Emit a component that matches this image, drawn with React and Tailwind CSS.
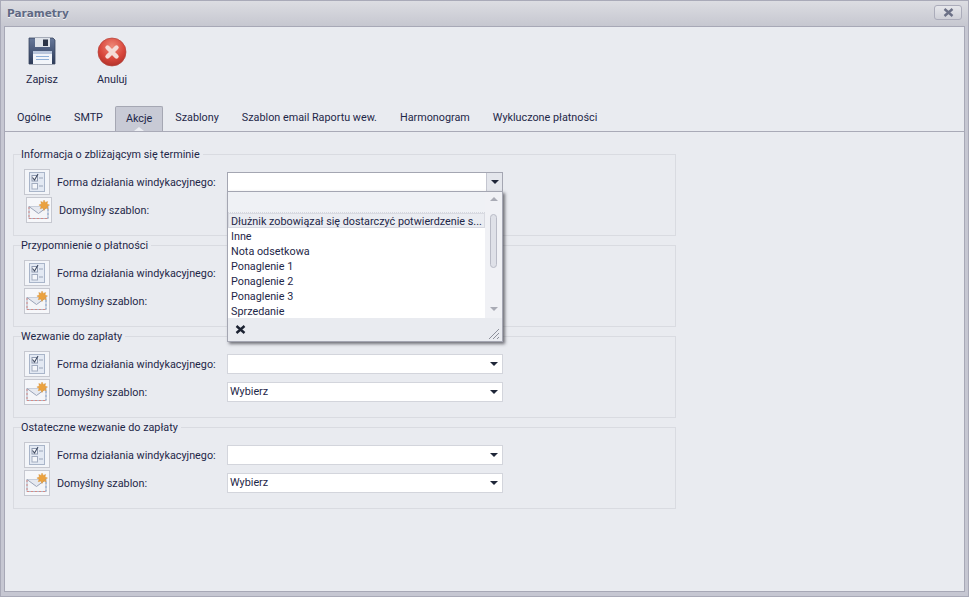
import React from "react";

const font = { fontFamily: 'Roboto, sans-serif' };

function Floppy() {
  return (
    <svg width="28" height="28" viewBox="0 0 28 28">
      <defs>
        <linearGradient id="fl" x1="0" y1="0" x2="0" y2="1">
          <stop offset="0" stopColor="#67789a" />
          <stop offset="1" stopColor="#2c3a58" />
        </linearGradient>
      </defs>
      <path d="M1 1h24l2 2v24H1z" fill="url(#fl)" stroke="#3a4660" strokeWidth="0.8" />
      <rect x="7" y="1" width="15" height="9" fill="#dfe3ea" />
      <rect x="15" y="2.5" width="5" height="6.5" fill="#2b3346" />
      <rect x="5" y="14" width="19" height="13" fill="#f2f5fa" />
      <rect x="5" y="14" width="19" height="3" fill="#b9c6dc" />
      <path d="M8 19.5h13M8 22.5h13" stroke="#8fb0d8" strokeWidth="1" />
    </svg>
  );
}

function Cancel() {
  return (
    <svg width="30" height="30" viewBox="0 0 30 30">
      <defs>
        <radialGradient id="rd" cx="0.5" cy="0.3" r="0.8">
          <stop offset="0" stopColor="#ee8878" />
          <stop offset="0.55" stopColor="#d9473c" />
          <stop offset="1" stopColor="#a42a24" />
        </radialGradient>
      </defs>
      <circle cx="15" cy="15" r="14" fill="url(#rd)" stroke="#b5453c" strokeWidth="0.7" />
      <path d="M10.5 10.5l9 9M19.5 10.5l-9 9" stroke="#f5dcd8" strokeWidth="4.4" strokeLinecap="round" />
    </svg>
  );
}

function CheckIcon() {
  return (
    <div className="w-[26px] h-[26px] border border-[#c6c8d0] bg-[#f3f5f9] flex items-center justify-center shrink-0">
      <svg width="20" height="20" viewBox="0 0 20 20">
        <rect x="2.5" y="0.5" width="15" height="19" fill="#e3e9f3" stroke="#a9b5c9" />
        <rect x="5" y="3.5" width="5.5" height="5.5" fill="#f4f6fa" stroke="#8f9ab0" />
        <path d="M5.5 5.5l2 2.5 3.5-6" fill="none" stroke="#3f4a60" strokeWidth="1.1" />
        <rect x="5" y="11.5" width="5.5" height="5.5" fill="#f4f6fa" stroke="#a3adc0" />
        <path d="M12 6h4M12 14h4" stroke="#9aa5b9" />
      </svg>
    </div>
  );
}

function MailIcon() {
  return (
    <div className="w-[26px] h-[26px] border border-[#c6c8d0] bg-[#f6f7fa] flex items-center justify-center shrink-0">
      <svg width="22" height="20" viewBox="0 0 22 20">
        <rect x="1" y="6.5" width="19" height="12" fill="#f4f5f8" stroke="#aab3c4" />
        <path d="M1 6.5l9.5 7 9.5-7" fill="#e6e9f0" stroke="#9aa4b8" />
        <path d="M1 18.5h19" stroke="#d68a86" strokeDasharray="2 2" />
        <path d="M1 7v11" stroke="#d68a86" strokeDasharray="2 2" />
        <path d="M20 9v9" stroke="#8aa9d2" strokeDasharray="2 2" />
        <path d="M16 0l1.2 2.4 2.4-.9-.6 2.5 2.5 1-2.3 1.3 1 2.4-2.6-.6L16 10.5l-1.2-2.4-2.6.6 1-2.4-2.3-1.3 2.5-1-.6-2.5 2.4.9z" fill="#eba23f" stroke="#d58a2a" strokeWidth="0.4" />
      </svg>
    </div>
  );
}

function Arrow() {
  return <div className="w-0 h-0 border-l-[4px] border-r-[4px] border-t-[4px] border-l-transparent border-r-transparent border-t-[#1f2638]" />;
}

function Combo({ value, open }) {
  return (
    <div className={`w-[276px] h-5 flex items-center bg-white border text-[10.8px] ${open ? "border-[#a4a6b2]" : "border-[#d3d5dc]"}`}>
      <span className="flex-1 pl-[2px] pt-px">{value}</span>
      {open ? (
        <div className="w-4 h-full bg-[#e4e6ec] border-l border-[#c4c6d0] flex items-center justify-center">
          <Arrow />
        </div>
      ) : (
        <div className="w-4 h-full flex items-center justify-center">
          <Arrow />
        </div>
      )}
    </div>
  );
}

function Popup() {
  const items = ["Inne", "Nota odsetkowa", "Ponaglenie 1", "Ponaglenie 2", "Ponaglenie 3", "Sprzedanie"];
  return (
    <div className="absolute left-0 top-[19px] w-[276px] h-[151px] bg-white border border-[#a4a6b2] shadow-[2px_2px_3px_rgba(60,60,70,0.7)] z-10 flex flex-col">
      <div className="flex-1 flex min-h-0">
        <div className="flex-1 min-w-0 flex flex-col">
          <div className="h-[21px] bg-[#eff1f5] border-b border-dotted border-[#d5d7de] shrink-0" />
          <div className="h-[15px] shrink-0 bg-[#eaecf1] border border-[#d8dae1] pl-[2px] pt-px leading-[13px] text-[10.8px] whitespace-nowrap overflow-hidden">
            Dłużnik zobowiązał się dostarczyć potwierdzenie s...
          </div>
          {items.map((t) => (
            <div key={t} className="h-[15px] shrink-0 pl-[3px] pt-px leading-[15px] text-[10.8px]">{t}</div>
          ))}
        </div>
        <div className="w-[17px] bg-[#f0f1f5] flex flex-col items-center pt-[5px] shrink-0">
          <div className="w-0 h-0 border-l-[4px] border-r-[4px] border-b-[4px] border-l-transparent border-r-transparent border-b-[#a9abb5]" />
          <div className="w-[7px] h-[54px] mt-[13px] bg-[#dfe1e8] border border-[#b9bbc6] rounded-[4px]" />
          <div className="mt-auto mb-[7px] w-0 h-0 border-l-[4px] border-r-[4px] border-t-[4px] border-l-transparent border-r-transparent border-t-[#a9abb5]" />
        </div>
      </div>
      <div className="h-[23px] bg-[#e9ebf0] flex items-center justify-between pl-[7px] pr-[2px] shrink-0">
        <svg width="11" height="9" viewBox="0 0 11 9">
          <path d="M1.5 1l8 7M9.5 1l-8 7" stroke="#1c2232" strokeWidth="2.4" />
        </svg>
        <svg width="12" height="12" viewBox="0 0 12 12" className="self-end mb-[1px]">
          <path d="M1 11L11 1M5 11l6-6M9 11l2-2" stroke="#8d909b" strokeWidth="1" />
        </svg>
      </div>
    </div>
  );
}

function Group({ title, first, covered }) {
  return (
    <fieldset className="w-[663px] h-[88px] border border-[#d9dbe1] px-[10px] min-w-0">
      <legend className="ml-[-3px] pr-[3px] leading-[13px] text-[10.8px] h-[13px] whitespace-nowrap">
        {title}
      </legend>
      <div className="flex flex-col mt-[8px]">
        <div className="flex items-center h-[26px]">
          <CheckIcon />
          <span className="ml-[7px] pt-[2px] w-[170px] whitespace-nowrap text-[10.8px]">Forma działania windykacyjnego:</span>
          <div className="relative">
            <Combo value="" open={first} />
            {first && <Popup />}
          </div>
        </div>
        <div className={`flex items-center h-[26px] mt-[2px] ${first ? "ml-[2px]" : ""}`}>
          <MailIcon />
          <span className="ml-[7px] pt-[2px] text-[10.8px] w-[170px] whitespace-nowrap">Domyślny szablon:</span>
          {!first && <Combo value={covered ? "" : "Wybierz"} />}
        </div>
      </div>
    </fieldset>
  );
}

export default function App() {
  const tabs = ["Ogólne", "SMTP", "Akcje", "Szablony", "Szablon email Raportu wew.", "Harmonogram", "Wykluczone płatności"];
  return (
    <div style={font} className="w-[969px] h-[597px] bg-[#c6c7d2] border border-[#a9aab8] flex flex-col overflow-hidden text-[#1e2748]">
      <div className="h-[25px] bg-gradient-to-b from-[#dcdde2] to-[#c6c7d0] flex items-center justify-between pl-[6px] pr-[6px] shrink-0">
        <span className="font-['DejaVu_Sans'] font-bold text-[10.5px] text-[#5f6984] [text-shadow:0_1px_0_#f4f4f6]">Parametry</span>
        <div className="w-[28px] h-[15px] mb-[2px] rounded-[3px] border border-[#abacba] bg-gradient-to-b from-[#e6e7eb] to-[#cfd0d8] flex items-center justify-center">
          <svg width="11" height="9" viewBox="0 0 11 9">
            <path d="M1.5 1l8 7M9.5 1l-8 7" stroke="#6b7086" strokeWidth="2.4" />
          </svg>
        </div>
      </div>
      <div className="mx-[3px] mb-[4px] flex-1 bg-[#e9ebf0] border border-[#a7a8b6] flex flex-col min-h-0">
        <div className="h-[79px] flex pl-[14px] pt-[10px] shrink-0">
          <div className="w-[46px] flex flex-col items-center">
            <Floppy />
            <span className="text-[10.8px] mt-[7px]">Zapisz</span>
          </div>
          <div className="w-[50px] ml-[22px] flex flex-col items-center">
            <Cancel />
            <span className="text-[10.8px] mt-[5px]">Anuluj</span>
          </div>
        </div>
        <div className="h-[26px] flex items-stretch border-b border-[#a9aab7] pl-[1px] gap-[1px] shrink-0">
          {tabs.map((t) =>
            t === "Akcje" ? (
              <div key={t} className="relative px-[10px] border border-b-0 border-[#a5a7b3] rounded-t-[2px] bg-[#c8cad5] flex items-center text-[10.8px]">
                {t}
                <div className="absolute left-1/2 -translate-x-1/2 bottom-0 w-0 h-0 border-l-[5px] border-r-[5px] border-b-[4px] border-l-transparent border-r-transparent border-b-[#eceef3]" />
              </div>
            ) : (
              <div key={t} className="px-[11px] flex items-center text-[10.8px]">{t}</div>
            )
          )}
        </div>
        <div className="pl-[8px] pt-[16px] flex flex-col gap-[3px]">
          <Group title="Informacja o zbliżającym się terminie" first />
          <Group title="Przypomnienie o płatności" covered />
          <Group title="Wezwanie do zapłaty" />
          <Group title="Ostateczne wezwanie do zapłaty" />
        </div>
      </div>
    </div>
  );
}
